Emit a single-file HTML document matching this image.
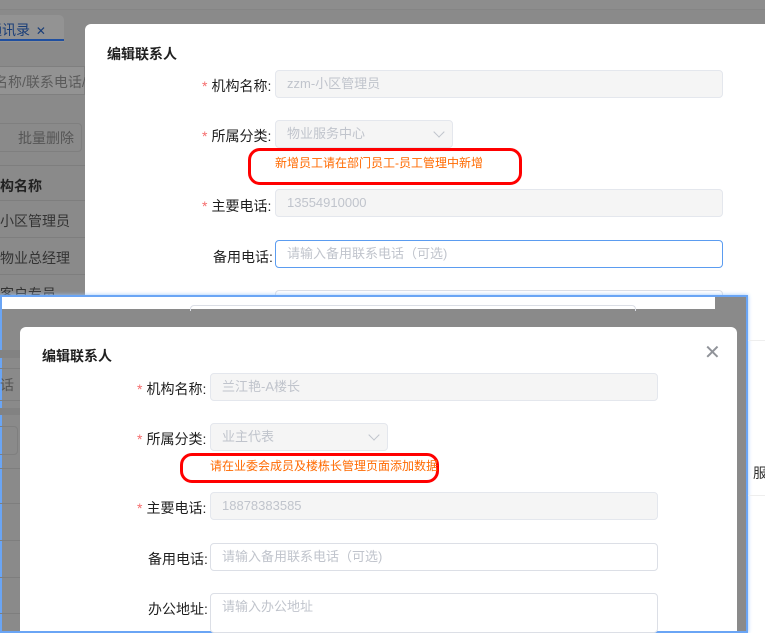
<!DOCTYPE html>
<html><head><meta charset="utf-8"><style>
*{box-sizing:border-box;margin:0;padding:0}
body{width:765px;height:633px;overflow:hidden;position:relative;background:#fff;font-family:"Liberation Sans","Noto Sans CJK SC",sans-serif;font-size:14px;color:#303133}
.a{position:absolute}
.gray{background:#8a8a8a}
.lbl{position:absolute;text-align:right;color:#1f1f1f;font-size:14px;white-space:nowrap}
.lbl b{color:#f56c6c;font-weight:normal;margin-right:4px}
.inp{position:absolute;height:28px;border:1px solid #e4e7ed;border-radius:4px;background:#f5f5f5;color:#c0c4cc;font-size:13px;line-height:26px;padding-left:11px;white-space:nowrap;overflow:hidden}
.inp.w{background:#fff;border-color:#dcdfe6}
.red{position:absolute;border:3px solid #f00;border-radius:12px}
.note{position:absolute;color:#ff6a00;font-size:12px;white-space:nowrap}
.bgt{position:absolute;color:#333;font-size:14px;white-space:nowrap}
.line{position:absolute;height:1px;background:#7e7e7e}
.chev{position:absolute;width:8px;height:8px;border-right:1px solid #c0c4cc;border-bottom:1px solid #c0c4cc;transform:rotate(45deg)}
</style></head><body>
<!-- top screenshot -->
<div class="a gray" style="left:0;top:0;width:765px;height:296px"></div>
<div class="a" style="left:0;top:0;width:765px;height:10px;background:#8d8d8d;border-bottom:1px solid #858585"></div>
<div class="a" style="left:0;top:15px;width:64px;height:27px;background:#939393;border-radius:0 5px 0 0"></div>
<div class="bgt" style="left:-12px;top:20px;color:#1a3e78;font-size:14px">通讯录 <span style="font-size:12px;margin-left:2px">✕</span></div>
<div class="a" style="left:0;top:39px;width:64px;height:2px;background:#1f4fa0"></div>
<div class="a" style="left:0;top:66px;width:85px;height:29px;background:#939393;border:1px solid #7f7f7f;border-left:none"></div>
<div class="bgt" style="left:-6px;top:72px;color:#5a5a5a">名称/联系电话/...</div>
<div class="a" style="left:-10px;top:123px;width:92px;height:29px;border:1px solid #7f7f7f;border-radius:4px"></div>
<div class="bgt" style="left:18px;top:128px;color:#555">批量删除</div>
<div class="line" style="left:0;top:165px;width:85px"></div>
<div class="bgt" style="left:0;top:176px;font-weight:bold;color:#222">构名称</div>
<div class="line" style="left:0;top:200px;width:85px"></div>
<div class="bgt" style="left:0;top:211px">小区管理员</div>
<div class="line" style="left:0;top:237px;width:85px"></div>
<div class="bgt" style="left:0;top:248px">物业总经理</div>
<div class="line" style="left:0;top:274px;width:85px"></div>
<div class="bgt" style="left:0;top:284px">客户专员</div>

<div class="a" style="left:85px;top:24px;width:680px;height:272px;background:#fff;border-radius:6px 0 0 0"></div>
<div class="bgt" style="left:107px;top:44px;font-weight:bold;font-size:14px;color:#1f1f1f">编辑联系人</div>
<div class="lbl" style="left:202px;top:76px"><b>*</b>机构名称:</div>
<div class="inp" style="left:275px;top:70px;width:448px">zzm-小区管理员</div>
<div class="lbl" style="left:202px;top:126px"><b>*</b>所属分类:</div>
<div class="inp" style="left:275px;top:120px;width:178px">物业服务中心</div>
<div class="chev" style="left:435px;top:128px"></div>
<div class="red" style="left:248px;top:148px;width:274px;height:37px"></div>
<div class="note" style="left:275px;top:154px">新增员工请在部门员工-员工管理中新增</div>
<div class="lbl" style="left:202px;top:196px"><b>*</b>主要电话:</div>
<div class="inp" style="left:275px;top:189px;width:448px">13554910000</div>
<div class="lbl" style="left:213px;top:247px">备用电话:</div>
<div class="inp w" style="left:275px;top:240px;width:448px;border-color:#5b9cf0">请输入备用联系电话（可选)</div>
<div class="a" style="left:275px;top:290px;width:448px;height:8px;border:1px solid #dcdfe6;border-bottom:none;border-radius:4px 4px 0 0"></div>

<!-- second screenshot -->
<div class="a" style="left:0;top:295px;width:748px;height:338px;border:2px solid #6aa5f5;box-shadow:0 0 4px #9cc6fb;background:#8a8a8a"></div>
<div class="a" style="left:2px;top:297px;width:713px;height:12px;background:#fff"></div>
<div class="a" style="left:190px;top:305px;width:446px;height:6px;border:1px solid #dcdfe6;border-bottom:none;border-radius:4px 4px 0 0"></div>
<div class="a" style="left:715px;top:297px;width:20px;height:12px;background:#8a8a8a"></div>
<div class="line" style="left:0;top:350px;width:20px;background:#828282;height:8px"></div>
<div class="line" style="left:0;top:368px;width:20px"></div>
<div class="bgt" style="left:0;top:375px;color:#555">话</div>
<div class="line" style="left:0;top:400px;width:20px"></div>
<div class="line" style="left:0;top:408px;width:20px;background:#828282;height:7px"></div>
<div class="a" style="left:-10px;top:426px;width:28px;height:29px;border:1px solid #7f7f7f;border-radius:4px"></div>
<div class="line" style="left:0;top:468px;width:20px"></div>
<div class="line" style="left:0;top:503px;width:20px"></div>
<div class="line" style="left:0;top:540px;width:20px"></div>
<div class="line" style="left:0;top:577px;width:20px"></div>
<div class="line" style="left:0;top:613px;width:20px"></div>
<div class="a" style="left:20px;top:327px;width:717px;height:304px;background:#fff;border-radius:6px 6px 0 0"></div>
<div class="bgt" style="left:42px;top:346px;font-weight:bold;color:#1f1f1f">编辑联系人</div>
<div class="bgt" style="left:704px;top:340px;font-size:20px;color:#909399">✕</div>
<div class="lbl" style="left:137px;top:379px"><b>*</b>机构名称:</div>
<div class="inp" style="left:210px;top:373px;width:448px">兰江艳-A楼长</div>
<div class="lbl" style="left:137px;top:429px"><b>*</b>所属分类:</div>
<div class="inp" style="left:210px;top:423px;width:178px">业主代表</div>
<div class="chev" style="left:370px;top:431px"></div>
<div class="red" style="left:180px;top:453px;width:259px;height:30px"></div>
<div class="note" style="left:210px;top:457px">请在业委会成员及楼栋长管理页面添加数据</div>
<div class="lbl" style="left:137px;top:498px"><b>*</b>主要电话:</div>
<div class="inp" style="left:210px;top:492px;width:448px">18878383585</div>
<div class="lbl" style="left:148px;top:549px">备用电话:</div>
<div class="inp w" style="left:210px;top:543px;width:448px">请输入备用联系电话（可选)</div>
<div class="lbl" style="left:148px;top:599px">办公地址:</div>
<div class="inp w" style="left:210px;top:593px;width:448px;height:40px">请输入办公地址</div>
<div class="a" style="left:748px;top:340px;width:17px;height:1px;background:#eee"></div>
<div class="a" style="left:748px;top:495px;width:17px;height:1px;background:#eee"></div>
<div class="bgt" style="left:753px;top:463px;color:#333">服</div>
</body></html>
